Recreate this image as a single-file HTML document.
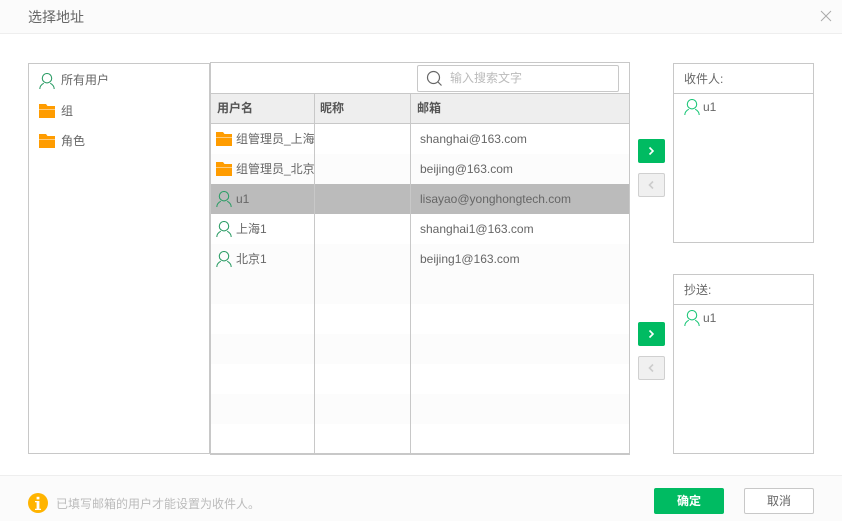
<!DOCTYPE html>
<html lang="zh"><head><meta charset="utf-8"><style>
html,body{margin:0;padding:0;background:#fff}
body{width:842px;height:521px;position:relative;overflow:hidden;font-family:"Liberation Sans","Noto Sans CJK SC",sans-serif;font-size:12px;color:#666}
div,svg{position:absolute;box-sizing:border-box}
.t{white-space:nowrap;line-height:16px;height:16px}
.b{font-weight:bold;color:#555}
.l{background:#c8c8c8}
</style></head><body>
<svg width="0" height="0" style="display:none"><defs>
<symbol id="u" viewBox="0 0 16 16"><circle cx="8" cy="5.2" r="4.7" fill="none" stroke-width="1.1" stroke="currentColor"/><path d="M.8 16C.8 13.2 2.6 11.4 4.8 10.2M15.2 16C15.2 13.2 13.4 11.4 11.2 10.2" fill="none" stroke-width="1.1" stroke="currentColor"/></symbol>
<symbol id="f" viewBox="0 0 16 14"><path d="M0 0H7L8.5 2H16V5.2H0ZM0 5.8H16V14H0Z" fill="#ff9c00"/></symbol>
</defs></svg>

<div style="left:0;top:0;width:842px;height:34px;background:#fbfbfb;border-bottom:1px solid #eee"></div>
<div class="t" style="left:28px;top:8px;font-size:14px;color:#666;line-height:18px;height:18px">选择地址</div>
<svg style="left:820px;top:10px" width="12" height="12" viewBox="0 0 12 12"><path d="M1 1L11 11M11 1L1 11" stroke="#aaa" stroke-width="1" fill="none"/></svg>

<!-- left panel -->
<div style="left:28px;top:63px;width:182px;height:391px;border:1px solid #c8c8c8"></div>
<svg style="left:39px;top:73px;color:#2f9e68" width="16" height="16"><use href="#u"/></svg>
<div class="t" style="left:61px;top:72px">所有用户</div>
<svg style="left:39px;top:104px" width="16" height="14"><use href="#f"/></svg>
<div class="t" style="left:61px;top:103px">组</div>
<svg style="left:39px;top:134px" width="16" height="14"><use href="#f"/></svg>
<div class="t" style="left:61px;top:133px">角色</div>

<!-- table -->
<div style="left:210px;top:62px;width:420px;height:393px;border:1px solid #c8c8c8;border-bottom-width:2px"></div>
<div style="left:417px;top:65px;width:202px;height:27px;border:1px solid #c8c8c8;border-radius:2px;background:#fff"></div>
<svg style="left:426px;top:70px" width="17" height="17" viewBox="0 0 17 17"><circle cx="7.5" cy="7.5" r="6" fill="none" stroke="#666" stroke-width="1.2"/><path d="M12 12L15.5 15.5" stroke="#666" stroke-width="1.2"/></svg>
<div class="t" style="left:450px;top:70px;color:#bbb">输入搜索文字</div>

<div style="left:211px;top:93px;width:418px;height:31px;background:#eee;border-top:1px solid #c8c8c8;border-bottom:1px solid #c8c8c8"></div>
<div style="left:211px;top:154px;width:418px;height:30px;background:#fcfcfc"></div>
<div style="left:211px;top:184px;width:418px;height:30px;background:#bbb"></div>
<div style="left:211px;top:244px;width:418px;height:30px;background:#fcfcfc"></div>
<div style="left:211px;top:274px;width:418px;height:30px;background:#fcfcfc"></div>
<div style="left:211px;top:334px;width:418px;height:30px;background:#fcfcfc"></div>
<div style="left:211px;top:394px;width:418px;height:30px;background:#fcfcfc"></div>
<div class="l" style="left:314px;top:93px;width:1px;height:360px"></div>
<div class="l" style="left:410px;top:93px;width:1px;height:360px"></div>

<div class="t b" style="left:217px;top:100px">用户名</div>
<div class="t b" style="left:320px;top:100px">昵称</div>
<div class="t b" style="left:417px;top:100px">邮箱</div>

<svg style="left:216px;top:132px" width="16" height="14"><use href="#f"/></svg>
<div class="t" style="left:236px;top:131px;width:78px;overflow:hidden">组管理员_上海</div>
<div class="t" style="left:420px;top:131px">shanghai@163.com</div>
<svg style="left:216px;top:162px" width="16" height="14"><use href="#f"/></svg>
<div class="t" style="left:236px;top:161px;width:78px;overflow:hidden">组管理员_北京</div>
<div class="t" style="left:420px;top:161px">beijing@163.com</div>
<svg style="left:216px;top:191px;color:#2f9e68" width="16" height="16"><use href="#u"/></svg>
<div class="t" style="left:236px;top:191px">u1</div>
<div class="t" style="left:420px;top:191px">lisayao@yonghongtech.com</div>
<svg style="left:216px;top:221px;color:#2f9e68" width="16" height="16"><use href="#u"/></svg>
<div class="t" style="left:236px;top:221px">上海1</div>
<div class="t" style="left:420px;top:221px">shanghai1@163.com</div>
<svg style="left:216px;top:251px;color:#2f9e68" width="16" height="16"><use href="#u"/></svg>
<div class="t" style="left:236px;top:251px">北京1</div>
<div class="t" style="left:420px;top:251px">beijing1@163.com</div>

<!-- arrows -->
<div style="left:638px;top:139px;width:27px;height:24px;background:#00bb62;border-radius:2px"></div>
<svg style="left:638px;top:139px" width="27" height="24"><path d="M11.5 8.5L15 12L11.5 15.5" fill="none" stroke="#fff" stroke-width="1.6"/></svg>
<div style="left:638px;top:173px;width:27px;height:24px;background:#f0f0f0;border:1px solid #d0d0d0;border-radius:2px"></div>
<svg style="left:638px;top:173px" width="27" height="24"><path d="M15 8.5L11.5 12L15 15.5" fill="none" stroke="#ccc" stroke-width="1.6"/></svg>
<div style="left:638px;top:322px;width:27px;height:24px;background:#00bb62;border-radius:2px"></div>
<svg style="left:638px;top:322px" width="27" height="24"><path d="M11.5 8.5L15 12L11.5 15.5" fill="none" stroke="#fff" stroke-width="1.6"/></svg>
<div style="left:638px;top:356px;width:27px;height:24px;background:#f0f0f0;border:1px solid #d0d0d0;border-radius:2px"></div>
<svg style="left:638px;top:356px" width="27" height="24"><path d="M15 8.5L11.5 12L15 15.5" fill="none" stroke="#ccc" stroke-width="1.6"/></svg>

<!-- right panels -->
<div style="left:673px;top:63px;width:141px;height:180px;border:1px solid #c8c8c8"></div>
<div class="l" style="left:674px;top:93px;width:139px;height:1px"></div>
<div class="t" style="left:684px;top:71px">收件人:</div>
<svg style="left:684px;top:99px;color:#1fc77a" width="16" height="16"><use href="#u"/></svg>
<div class="t" style="left:703px;top:99px">u1</div>

<div style="left:673px;top:274px;width:141px;height:180px;border:1px solid #c8c8c8"></div>
<div class="l" style="left:674px;top:304px;width:139px;height:1px"></div>
<div class="t" style="left:684px;top:282px">抄送:</div>
<svg style="left:684px;top:310px;color:#1fc77a" width="16" height="16"><use href="#u"/></svg>
<div class="t" style="left:703px;top:310px">u1</div>

<!-- footer -->
<div style="left:0;top:475px;width:842px;height:46px;background:#fbfbfb;border-top:1px solid #eee"></div>
<svg style="left:28px;top:493px" width="20" height="20" viewBox="0 0 20 20"><circle cx="10" cy="10" r="10" fill="#ffb400"/><rect x="8.6" y="3.8" width="2.8" height="2.6" fill="#fff"/><path d="M7 8H11.4V15.8H13V17H7V15.8H8.6V9.2H7Z" fill="#fff"/></svg>
<div class="t" style="left:56px;top:496px;color:#bbb">已填写邮箱的用户才能设置为收件人。</div>
<div style="left:654px;top:488px;width:70px;height:26px;background:#00bb62;border-radius:2px"></div>
<div class="t" style="left:654px;top:493px;width:70px;text-align:center;color:#fff;font-weight:bold">确定</div>
<div style="left:744px;top:488px;width:70px;height:26px;background:#fff;border:1px solid #c8c8c8;border-radius:2px"></div>
<div class="t" style="left:744px;top:493px;width:70px;text-align:center;color:#666">取消</div>
</body></html>
